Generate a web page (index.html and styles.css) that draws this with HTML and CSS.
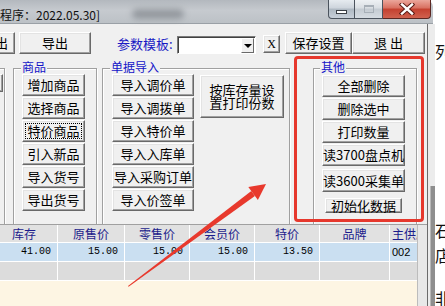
FILE: index.html
```html
<!DOCTYPE html>
<html lang="zh-CN">
<head>
    <meta charset="UTF-8">
    <meta name="viewport" content="width=device-width, initial-scale=1.0">
    <title>价签打印程序</title>
    <link rel="stylesheet" href="styles.css">
</head>
<body>
<div class="screen">
    <div class="win">
        <div class="titlebar">
            <span class="title-text">程序：2022.05.30]</span>
            <span class="title-blur"></span>
            <div class="caption-btns">
                <span class="cap cap-min"><i></i></span>
                <span class="cap cap-max"><i></i></span>
                <span class="cap cap-close">
                    <svg width="16" height="12" viewBox="0 0 16 12">
                        <path d="M3 1.5 L13 10.5 M13 1.5 L3 10.5" stroke="#5a1a14" stroke-width="4.4" stroke-linecap="square"/>
                        <path d="M3 1.5 L13 10.5 M13 1.5 L3 10.5" stroke="#fff" stroke-width="2.4" stroke-linecap="square"/>
                    </svg>
                </span>
            </div>
        </div>

        <div class="client">
            <div class="main">
                <div class="toolbar">
                    <span class="btn tb-cut">导出</span>
                    <span class="btn tb-export">导出</span>
                    <span class="tb-label">参数模板:</span>
                    <span class="combo"><span class="combo-arrow"></span></span>
                    <span class="btn tb-x">X</span>
                    <span class="btn tb-save">保存设置</span>
                    <span class="btn tb-quit">退 出</span>
                </div>

                <div class="panel">
                    <div class="group g-left">
                        <span class="btn left-btn"></span>
                    </div>

                    <div class="group g-goods">
                        <span class="group-title">商品</span>
                        <div class="stack">
                            <span class="btn">增加商品</span>
                            <span class="btn">选择商品</span>
                            <span class="btn focus">特价商品</span>
                            <span class="btn">引入新品</span>
                            <span class="btn">导入货号</span>
                            <span class="btn">导出货号</span>
                        </div>
                    </div>

                    <div class="group g-import">
                        <span class="group-title">单据导入</span>
                        <div class="import-body">
                            <div class="stack">
                                <span class="btn">导入调价单</span>
                                <span class="btn">导入调拨单</span>
                                <span class="btn">导入特价单</span>
                                <span class="btn">导入入库单</span>
                                <span class="btn">导入采购订单</span>
                                <span class="btn">导入价签单</span>
                            </div>
                            <span class="btn big-btn"><span class="big-text">按库存量设<br>置打印份数</span></span>
                        </div>
                    </div>

                    <div class="group g-other">
                        <span class="group-title">其他</span>
                        <div class="stack">
                            <span class="btn">全部删除</span>
                            <span class="btn">删除选中</span>
                            <span class="btn">打印数量</span>
                            <span class="btn">读3700盘点机</span>
                            <span class="btn btn-3600">读3600采集单</span>
                            <span class="btn btn-init">初始化数据</span>
                        </div>
                    </div>
                </div>

                <div class="grid">
                    <div class="table">
                        <div class="row head">
                            <span>库存</span>
                            <span>原售价</span>
                            <span>零售价</span>
                            <span>会员价</span>
                            <span>特价</span>
                            <span>品牌</span>
                            <span>主供应商</span>
                        </div>
                        <div class="row data selected">
                            <span class="num">41.00</span>
                            <span class="num">15.00</span>
                            <span class="num">15.00</span>
                            <span class="num">15.00</span>
                            <span class="num">13.50</span>
                            <span></span>
                            <span class="code">002</span>
                        </div>
                        <div class="row data empty">
                            <span></span><span></span><span></span><span></span><span></span><span></span><span></span>
                        </div>
                    </div>
                    <div class="grid-side"></div>
                </div>
            </div>
            <div class="rail"><div class="track"><div class="thumb"></div></div></div>
        </div>
    </div>

    <div class="outside">
        <span class="peek peek-1">列</span>
        <span class="peek peek-2">石</span>
        <span class="peek peek-3">店</span>
        <span class="peek peek-4">非</span>
    </div>
</div>

<!-- 标注：红框和箭头 -->
<div class="mark"></div>
<svg class="arrow" width="445" height="306" viewBox="0 0 445 306">
    <polygon points="128,286 128.6,286.8 254.9,195.9 251.3,191.1" fill="#e8392d"/>
    <polygon points="266,184 257.9,199.9 248.3,187.1" fill="#e8392d"/>
</svg>
</body>
</html>
```

FILE: styles.css
```css
/**
 * 基本设定
 */
* {box-sizing: border-box}
html, body {margin: 0}
body {
    width: 445px;
    height: 306px;
    overflow: hidden;
    position: relative;
    background: #fff;
    font-family: "Noto Sans CJK SC", "Liberation Sans", sans-serif;
    font-size: 13px;
    color: #000;
}

.screen {
    display: flex;
    height: 306px;
    overflow: hidden;
}

.win {
    width: 435px;
    display: flex;
    flex-direction: column;
}

/**
 * 标题栏（Win7 风格）
 */
.titlebar {
    height: 25px;
    margin-right: 2px;
    border-top-right-radius: 7px;
    border-bottom: 1px solid #9aa0a6;
    background: linear-gradient(#b3b8be, #c6cacf 45%, #bcc1c6);
    display: flex;
    align-items: flex-start;
}

.title-text {
    font-size: 12px;
    line-height: 14px;
    margin-top: 8px;
    white-space: nowrap;
    color: #111;
}

.title-blur {
    width: 52px;
    height: 10px;
    margin: 9px 0 0 32px;
    background: #80858b;
    border-radius: 6px;
    filter: blur(3px);
    opacity: .7;
}

.caption-btns {
    margin-left: auto;
    margin-right: 2px;
    display: flex;
}

.cap {
    height: 19px;
    border: 1px solid #4b535d;
    border-top: none;
    display: flex;
    align-items: center;
    justify-content: center;
    background: linear-gradient(#e6ebf0, #cdd4dc 45%, #aeb8c2 50%, #c8d0d9);
}

.cap-min {
    width: 27px;
    border-bottom-left-radius: 4px;
}

.cap-min i {
    width: 11px;
    height: 4px;
    margin-top: 6px;
    background: #fff;
    border: 1px solid #3a3f45;
}

.cap-max {
    width: 28px;
    border-left: none;
    background: linear-gradient(#eef1f4, #d9dee3 45%, #c4cbd2 50%, #d6dce2);
}

.cap-max i {
    width: 10px;
    height: 8px;
    border: 1px solid #a7afb7;
    border-top-width: 2px;
}

.cap-close {
    width: 48px;
    border-left: none;
    border-bottom-right-radius: 4px;
    border-color: #5b2722;
    background: linear-gradient(#eba69b, #d86f60 45%, #c4402f 50%, #d0614f);
}

/**
 * 窗口内容
 */
.client {
    flex: 1;
    display: flex;
}

.main {
    width: 428px;
    background: #f0f0f0;
    border-right: 1px solid #6b6b6b;
    display: flex;
    flex-direction: column;
}

.rail {
    width: 7px;
    background: #ececec;
    padding: 40px 0 0 2px;
}

.track {
    width: 5px;
    height: 100%;
    background: #cfcfcf;
}

.thumb {
    margin-top: 122px;
    height: 120px;
    background: #8e8e8e;
    border-left: 1px solid #b8b8b8;
}

.outside {
    width: 10px;
    height: 306px;
    overflow: hidden;
    display: flex;
    flex-direction: column;
    font-size: 16px;
    line-height: 16px;
    color: #111;
}

.peek {flex-shrink: 0}
.peek-1 {margin-top: 43px}
.peek-2 {margin-top: 163px}
.peek-3 {margin-top: 9px}
.peek-4 {margin-top: 27px}

/**
 * 按钮（经典立体）
 */
.btn {
    height: 22px;
    flex-shrink: 0;
    background: #f0f0f0;
    border: 1px solid;
    border-color: #fff #696969 #696969 #fff;
    box-shadow: inset -1px -1px 0 #a0a0a0, inset 1px 1px 0 #e3e3e3;
    display: flex;
    align-items: center;
    justify-content: center;
    font-size: 13px;
    line-height: 14px;
    white-space: nowrap;
}

.btn.focus {
    outline: 1px dotted #000;
    outline-offset: -4px;
}

/**
 * 工具栏
 */
.toolbar {
    height: 33px;
    display: flex;
    align-items: flex-start;
    padding-top: 8px;
}

.tb-cut {width: 40px; margin-left: -25px}
.tb-export {width: 72px; margin-left: 4px}

.tb-label {
    width: 60px;
    margin: 5px 0 0 26px;
    line-height: 14px;
    color: #1a1ac4;
    white-space: nowrap;
}

.combo {
    width: 79px;
    height: 18px;
    margin-top: 4px;
    background: #fff;
    border: 1px solid;
    border-color: #7a7a7a #fff #fff #7a7a7a;
    box-shadow: inset 1px 1px 0 #404040;
    display: flex;
    justify-content: flex-end;
    padding: 1px 1px 0 0;
}

.combo-arrow {
    width: 13px;
    height: 15px;
    background: #f0f0f0;
    border: 1px solid;
    border-color: #fff #696969 #696969 #fff;
    position: relative;
}

.combo-arrow::after {
    content: "";
    position: absolute;
    left: 2px;
    top: 5px;
    border-left: 4px solid transparent;
    border-right: 4px solid transparent;
    border-top: 4px solid #000;
}

.tb-x {
    width: 17px;
    height: 18px;
    margin: 3px 0 0 7px;
    font-family: "Liberation Serif", serif;
    font-size: 12px;
}

.tb-save {width: 67px; margin-left: 5px}
.tb-quit {width: 73px}

/**
 * 分组框
 */
.panel {
    height: 167px;
    overflow: hidden;
    display: flex;
    align-items: flex-start;
    padding-top: 11px;
}

.group {
    height: 160px;
    flex-shrink: 0;
    border: 1px solid #a0a0a0;
    box-shadow: inset 1px 1px 0 #fff, 1px 1px 0 #fff;
    display: flex;
    flex-direction: column;
}

.group-title {
    align-self: flex-start;
    margin: -9px 0 0 7px;
    padding: 0 1px;
    background: #f0f0f0;
    font-size: 12px;
    line-height: 14px;
    color: #1414c8;
}

.g-left {width: 46px; margin-left: -41px}
.left-btn {width: 30px; height: 18px; margin: 5px 0 0 13px}

.g-goods {width: 84px; margin-left: 8px}
.g-import {width: 188px; margin-left: 5px}
.g-other {width: 104px; margin-left: 23px}
.g-other .group-title {margin-left: 6px}

.stack {
    display: flex;
    flex-direction: column;
    gap: 1px;
}

.g-goods .stack {margin-left: 8px; width: 63px}

.import-body {
    display: flex;
    align-items: flex-start;
    margin-left: 9px;
}

.import-body .stack {width: 82px}

.big-btn {
    width: 84px;
    height: 43px;
    margin: 1px 0 0 6px;
    padding-bottom: 2px;
}

.big-text {
    display: block;
    line-height: 13px;
    text-align: center;
}

.g-other .stack {margin: 1px 0 0 8px; width: 83px}
.btn-3600 {height: 23px; margin-top: 2px}
.btn-init {width: 77px; height: 15px; margin: 5px 0 0 3px}

/**
 * 表格
 */
.grid {
    flex: 1;
    display: flex;
    border-top: 1px solid #a0a0a0;
}

.table {
    width: 417px;
    overflow: hidden;
    background: #fdf5e3;
}

.grid-side {
    flex: 1;
    background: #e8e8e8;
    border-left: 1px solid #bcbcbc;
}

.row {
    display: grid;
    grid-template-columns: 66px 66px 64px 64px 64px 69px 52px;
    column-gap: 1px;
    width: 440px;
    margin-left: -9px;
    padding-bottom: 1px;
    background: #fff;
}

.row span {
    white-space: nowrap;
    overflow: hidden;
}

.head span {
    height: 17px;
    line-height: 17px;
    background: #e1e1e1;
    text-align: center;
    font-size: 12px;
    color: #1c1c8c;
}

.data span {
    height: 18px;
    line-height: 18px;
}

.selected span {background: #cadff1}
.empty span {background: #dcdcdc}

.num {
    text-align: right;
    padding-right: 6px;
    font-family: "Liberation Mono", monospace;
    font-size: 10px;
}

.code {
    padding-left: 2px;
    font-family: "Liberation Sans", sans-serif;
    font-size: 11px;
}

/**
 * 标注层
 */
.mark {
    position: absolute;
    left: 294px;
    top: 56px;
    width: 130px;
    height: 166px;
    border: 3px solid #e6382d;
    border-radius: 4px;
}

.arrow {
    position: absolute;
    left: 0;
    top: 0;
    pointer-events: none;
}
```
